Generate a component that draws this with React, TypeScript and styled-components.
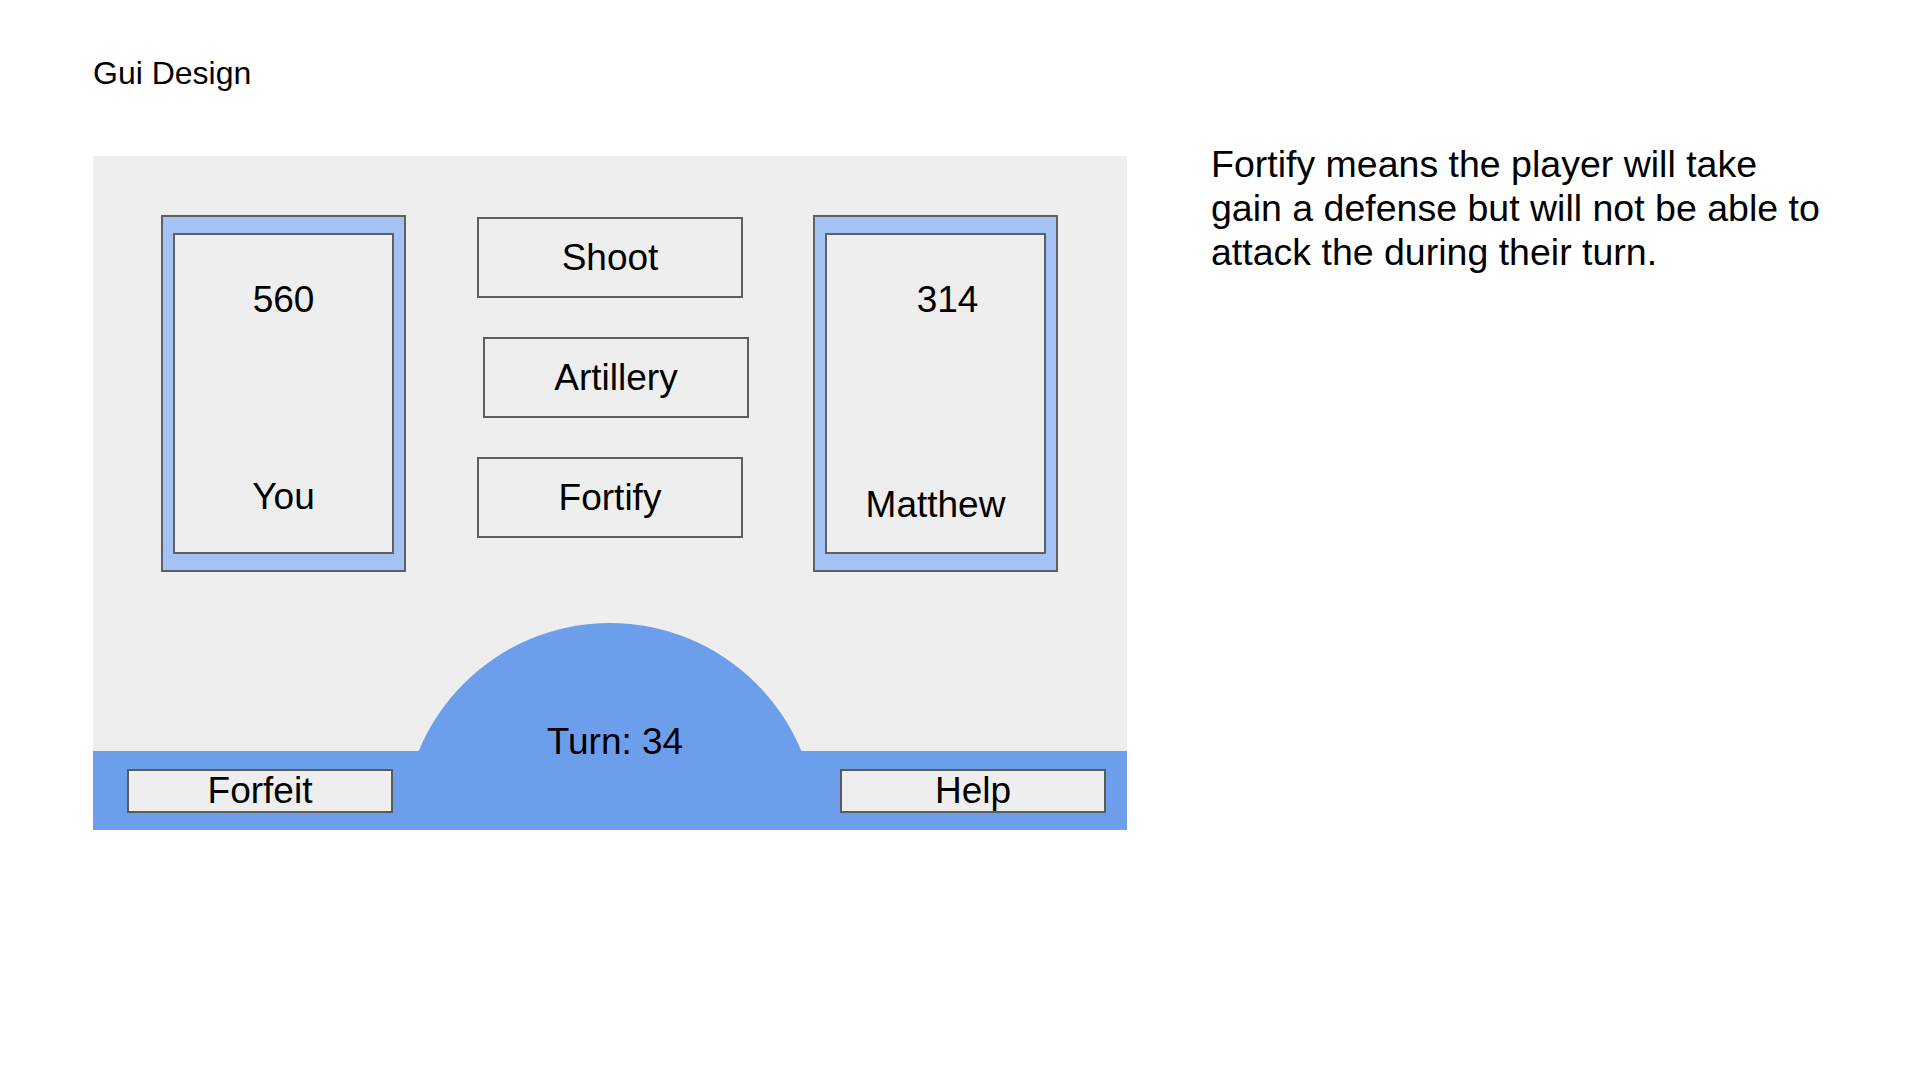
import styled, { createGlobalStyle } from "styled-components";

const GlobalStyle = createGlobalStyle`
  html, body {
    margin: 0;
    padding: 0;
    background: #ffffff;
  }
  body {
    font-family: "Liberation Sans", Arial, sans-serif;
    color: #000000;
  }
`;

const Page = styled.div`
  width: 1920px;
  height: 1080px;
  box-sizing: border-box;
  padding: 58px 0 0 93px;
  display: flex;
  align-items: flex-start;
`;

const LeftColumn = styled.div`
  display: flex;
  flex-direction: column;
`;

const Title = styled.div`
  font-size: 32px;
  line-height: 31px;
  height: 98px;
`;

const Panel = styled.div`
  position: relative;
  width: 1034px;
  height: 674px;
  background: #eeeeee;
  display: flex;
  flex-direction: column;
  overflow: hidden;
`;

const TopArea = styled.div`
  flex: 1;
  display: flex;
  align-items: flex-start;
  padding: 59px 0 0 68px;
`;

const PlayerCard = styled.div<{ $gap: number }>`
  width: 245px;
  height: 357px;
  box-sizing: border-box;
  border: 2px solid #606060;
  background: #a4c2f4;
  padding: 16px 10px;
  margin-left: ${(p) => p.$gap}px;
`;

const PlayerInner = styled.div`
  height: 100%;
  box-sizing: border-box;
  border: 2px solid #606060;
  background: #eeeeee;
  display: flex;
  flex-direction: column;
  align-items: center;
  padding-top: 44px;
  font-size: 37px;
  line-height: 42px;
`;

const Score = styled.div<{ $shift: number }>`
  padding-left: ${(p) => p.$shift}px;
`;

const PlayerName = styled.div<{ $bottom: number }>`
  margin-top: auto;
  margin-bottom: ${(p) => p.$bottom}px;
`;

const Actions = styled.div`
  width: 272px;
  margin: 2px 0 0 71px;
  display: flex;
  flex-direction: column;
  gap: 39px;
`;

const ActionButton = styled.div<{ $offset?: number }>`
  width: 266px;
  height: 81px;
  box-sizing: border-box;
  border: 2px solid #5f5f5f;
  background: #eeeeee;
  margin-left: ${(p) => p.$offset ?? 0}px;
  display: flex;
  align-items: center;
  justify-content: center;
  font-size: 37px;
`;

const BottomBar = styled.div`
  height: 79px;
  background: #6d9eeb;
  display: flex;
  align-items: center;
  justify-content: space-between;
  padding: 0 21px 0 34px;
`;

const BarButton = styled.div`
  width: 266px;
  height: 44px;
  box-sizing: border-box;
  border: 2px solid #5a5a5a;
  background: #eeeeee;
  display: flex;
  align-items: center;
  justify-content: center;
  font-size: 37px;
  line-height: 40px;
`;

const TurnDome = styled.div`
  position: absolute;
  left: 310px;
  bottom: 0;
  width: 414px;
  height: 207px;
  box-sizing: border-box;
  border-radius: 207px 207px 0 0;
  background: #6d9eeb;
  padding: 98px 0 0 10px;
  text-align: center;
  font-size: 37px;
  line-height: 42px;
`;

const Notes = styled.div`
  width: 620px;
  margin: 84px 0 0 84px;
  font-size: 37.5px;
  line-height: 44px;
`;

export default function App() {
  return (
    <>
      <GlobalStyle />
      <Page>
        <LeftColumn>
          <Title>Gui Design</Title>
          <Panel>
            <TopArea>
              <PlayerCard $gap={0}>
                <PlayerInner>
                  <Score $shift={0}>560</Score>
                  <PlayerName $bottom={34}>You</PlayerName>
                </PlayerInner>
              </PlayerCard>
              <Actions>
                <ActionButton>Shoot</ActionButton>
                <ActionButton $offset={6}>Artillery</ActionButton>
                <ActionButton>Fortify</ActionButton>
              </Actions>
              <PlayerCard $gap={64}>
                <PlayerInner>
                  <Score $shift={24}>314</Score>
                  <PlayerName $bottom={26}>Matthew</PlayerName>
                </PlayerInner>
              </PlayerCard>
            </TopArea>
            <BottomBar>
              <BarButton>Forfeit</BarButton>
              <BarButton>Help</BarButton>
            </BottomBar>
            <TurnDome>Turn: 34</TurnDome>
          </Panel>
        </LeftColumn>
        <Notes>
          Fortify means the player will take gain a defense but will not be
          able to attack the during their turn.
        </Notes>
      </Page>
    </>
  );
}
